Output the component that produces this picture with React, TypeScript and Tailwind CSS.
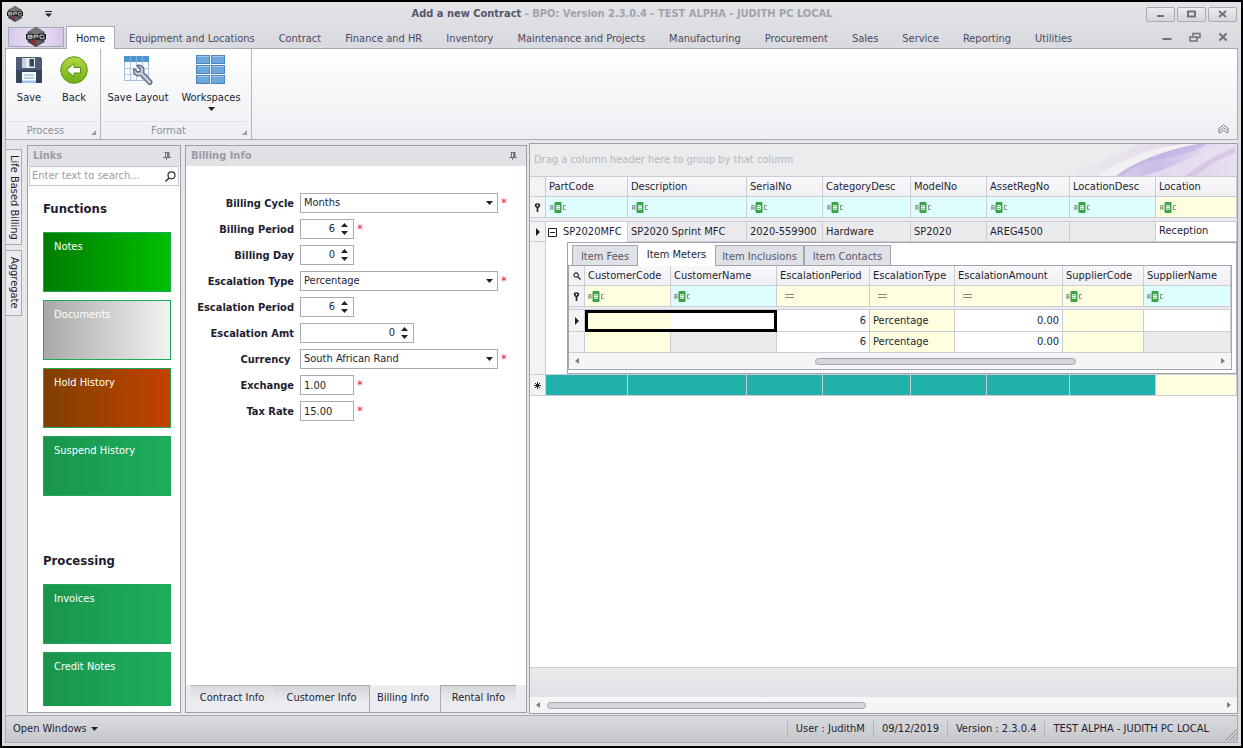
import { FC, ReactNode } from "react";

const ribbonTabs = ["Equipment and Locations", "Contract", "Finance and HR", "Inventory", "Maintenance and Projects", "Manufacturing", "Procurement", "Sales", "Service", "Reporting", "Utilities"];

const Logo: FC<{ className: string }> = ({ className }) => (
  <svg viewBox="0 0 20 20" className={className} aria-hidden="true">
    <path d="M10 0 18.500 5V15L10 20 1.500 15V5Z" fill="#454346" />
    <path d="M10 0 18.500 5 10 7.500 1.500 5Z" fill="#777578" />
    <path d="M10 20V12.500L18.500 15Z" fill="#5f5d60" />
    <rect x="0" y="7" width="20" height="5.500" fill="#1d1c1e" />
    <path d="M2 8.200H6V11.300H2ZM2 9.700H6M8 11.800V8.200H12V10H8M18 8.200H14V11.300H18V9.500" fill="none" stroke="#e0e0e0" strokeWidth=".9" />
    <circle cx="7.500" cy="15" r="1.500" fill="none" stroke="#c22" />
  </svg>
);

const DownArrow: FC<{ className?: string }> = ({ className = "" }) => (
  <svg viewBox="0 0 7 4" className={`h-1 w-[7px] ${className}`} aria-hidden="true"><path d="M0 0H7L3.500 4Z" fill="#222" /></svg>
);

const PinIcon: FC = () => (
  <svg viewBox="0 0 8 8" className="h-2 w-2" aria-hidden="true">
    <path d="M1.500 .5H6.500M2.500 0V5.500M0 5.500H8M3.500 6V8" stroke="#70727c" fill="none" />
    <path d="M4 1H6.500V5.500H4Z" fill="#70727c" />
  </svg>
);

const FilterPin: FC = () => (
  <svg viewBox="0 0 7 9" className="mx-auto h-[9px] w-[7px]" aria-hidden="true">
    <path d="M3.500 .3A2.700 2.300 0 0 1 6.200 2.700Q5.500 4.500 4.300 5V9H2.700V5Q1.500 4.500 .8 2.700A2.700 2.300 0 0 1 3.500 .3Z" fill="#222" />
    <circle cx="3.500" cy="2.500" r=".9" fill="#fff" />
  </svg>
);

const RowArrow: FC = () => (
  <svg viewBox="0 0 4 8" className="mx-auto h-2 w-1" aria-hidden="true"><path d="M0 0 4 4 0 8Z" fill="#222" /></svg>
);

const AbcIcon: FC = () => (
  <svg viewBox="0 0 16 11" className="h-[11px] w-4" aria-hidden="true">
    <rect x="4.500" y="0" width="7" height="11" rx="1" fill="#3aa547" />
    <path d="M.8 8V3.500H3V8M.8 6H3" stroke="#84868a" fill="none" />
    <path d="M6.800 3.500H9.300V7.500H6.800ZM6.800 5.500H9.300" stroke="#fff" fill="none" />
    <path d="M15.800 3.500H13.500V7.500H15.800" stroke="#84868a" fill="none" />
  </svg>
);

const EqualsIcon: FC = () => (
  <svg viewBox="0 0 9 4" className="h-1 w-[9px]" aria-hidden="true"><path d="M0 .5H9M0 3.500H9" stroke="#85878c" /></svg>
);

const SaveIcon: FC = () => (
  <svg viewBox="0 0 28 28" className="h-7 w-7" aria-hidden="true">
    <path d="M1 1H25.500L27 2.500V25.500Q27 27 25.500 27H2.500Q1 27 1 25.500Z" fill="#4b5c74" />
    <path d="M1 14H27V25.500Q27 27 25.500 27H2.500Q1 27 1 25.500Z" fill="#36455c" />
    <rect x="7" y="2" width="13" height="10" fill="#c9d0d9" />
    <rect x="11" y="2" width="9" height="10" fill="#e8ecf0" />
    <rect x="14.500" y="3" width="4.500" height="7.500" fill="#34445c" />
    <rect x="7" y="16" width="14" height="11" fill="#f4f8fc" />
    <path d="M7 24.500H21V27H7Z" fill="#9ec6ea" />
    <path d="M9 19H19M9 22H19" stroke="#7da6d4" />
  </svg>
);

const BackIcon: FC = () => (
  <svg viewBox="0 0 28 28" className="h-7 w-7" aria-hidden="true">
    <defs>
      <linearGradient id="lime" x2="0" y2="1"><stop stopColor="#b0d840" /><stop offset="1" stopColor="#6fae16" /></linearGradient>
    </defs>
    <circle cx="14" cy="14" r="13.300" fill="url(#lime)" stroke="#5c9a1b" />
    <path d="M6.500 14 14 7.500V11.500H20.500V17H14V21Z" fill="#fff" stroke="#558d15" strokeLinejoin="round" />
  </svg>
);

const LayoutIcon: FC = () => (
  <svg viewBox="0 0 30 30" className="h-[30px] w-[30px]" aria-hidden="true">
    <rect x="1.500" y="1.500" width="24" height="24" fill="#f6f9fd" stroke="#a9bdd6" />
    <path d="M1 1H26V7H1Z" fill="#4f93cf" />
    <path d="M7.500 7V26M13.500 7V26M19.500 7V26M1 13.500H26M1 19.500H26" stroke="#b9cbe0" fill="none" />
    <path d="M7.500 1V7M13.500 1V7M19.500 1V7" stroke="#7fb2e0" fill="none" />
    <path d="M14 10.500 Q18 9.500 20.300 12.500 Q21.500 15 20.500 17.500L29 26.500Q29 29.500 26.300 29.500L17.500 20.500Q14 21.500 11.500 19 10 16.500 11 13.800L14.500 17 17 16.500 17.300 14Z" fill="#c3ccd8" stroke="#5b6b82" strokeWidth="1.300" strokeLinejoin="round" />
  </svg>
);

const WorkspacesIcon: FC = () => (
  <svg viewBox="0 0 30 30" className="h-[30px] w-[30px]" aria-hidden="true">
    {[1, 11, 21].map((y) => (
      <g key={y} fill="#6fa8dc" stroke="#4c86bf">
        <rect x=".5" y={y - 0.5} width="13" height="8" />
        <rect x="15.500" y={y - 0.5} width="13" height="8" />
        <path d={`M1.500 ${y + 0.5}H13M16.500 ${y + 0.5}H28`} stroke="#a3caee" />
      </g>
    ))}
  </svg>
);

const RibbonGroup: FC<{ title: string; children: ReactNode }> = ({ title, children }) => (
  <div className="flex flex-col border-r border-[#b4b5bd] pr-1 pl-px">
    <div className="flex flex-1 gap-px pt-1">{children}</div>
    <div className="relative border-t border-[#e3e4e8] pr-3 text-center leading-[17px] text-[#8d8f99]">
      {title}
      <svg viewBox="0 0 5 5" className="absolute right-0 bottom-1 h-[5px] w-[5px]" aria-hidden="true"><path d="M5 0V5H0Z" fill="#9a9ba3" /></svg>
    </div>
  </div>
);

const RibbonButton: FC<{ label: string; wide?: boolean; menu?: boolean; children: ReactNode }> = ({ label, wide, menu, children }) => (
  <button className={`flex flex-col items-center ${wide ? "w-[72px]" : "w-11"}`}>
    <span className="flex h-[34px] items-center">{children}</span>
    <span className="mt-[3px] leading-4 whitespace-nowrap">{label}</span>
    {menu && <DownArrow className="mt-px" />}
  </button>
);

const PanelHeader: FC<{ title: string }> = ({ title }) => (
  <div className="flex h-5 shrink-0 items-center justify-between bg-[#e1e2e6] pr-[9px] pl-[5px] font-bold text-[#9a9ca8]">
    {title}
    <button aria-label={`Pin ${title}`}><PinIcon /></button>
  </div>
);

const Tile: FC<{ label: string; className: string }> = ({ label, className }) => (
  <button className={`flex h-[60px] w-full shrink-0 border px-2.5 pt-1.5 text-left leading-4 text-white ${className}`}>{label}</button>
);

const green = "border-[#1da957] bg-linear-to-r from-[#19954b] to-[#1dae5d]";

const Field: FC<{ id: string; label: string; required?: boolean; children: ReactNode }> = ({ id, label, required, children }) => (
  <div className="flex h-5 items-center">
    <label htmlFor={id} className="w-[114px] shrink-0 pt-0.5 pr-1.5 text-right font-bold whitespace-pre">{label}</label>
    {children}
    {required && <span className="pl-[3px] text-[13px] leading-4 text-[#f22]">*</span>}
  </div>
);

const SelectField: FC<{ id: string; label: string; value: string }> = ({ id, label, value }) => (
  <Field id={id} label={label} required>
    <div className="relative">
      <select id={id} className="block h-5 w-[198px] appearance-none border border-[#a9aab5] bg-white pl-[3px]"><option>{value}</option></select>
      <DownArrow className="pointer-events-none absolute top-2 right-[5px]" />
    </div>
  </Field>
);

const SpinField: FC<{ id: string; label: string; value: string; required?: boolean; wide?: boolean }> = ({ id, label, value, required, wide }) => (
  <Field id={id} label={label} required={required}>
    <div className={`flex h-5 border border-[#a9aab5] bg-white ${wide ? "w-[114px]" : "w-[54px]"}`}>
      <input id={id} defaultValue={value} inputMode="numeric" className="w-0 min-w-0 flex-1 text-right outline-none" />
      <div className="flex w-[18px] flex-col items-center justify-between py-[3px]">
        <button aria-label={`Increase ${label}`}><DownArrow className="block rotate-180" /></button>
        <button aria-label={`Decrease ${label}`}><DownArrow className="block" /></button>
      </div>
    </div>
  </Field>
);

const TextField: FC<{ id: string; label: string; value: string }> = ({ id, label, value }) => (
  <Field id={id} label={label} required>
    <input id={id} defaultValue={value} className="h-5 w-[54px] border border-[#a9aab5] bg-white pl-[3px] outline-none" />
  </Field>
);

const ScrollBar: FC<{ thumb: string }> = ({ thumb }) => (
  <div className="flex h-full items-center bg-[#f5f5f7] px-1.5">
    <svg viewBox="0 0 4 6" className="h-1.5 w-1" aria-hidden="true"><path d="M4 0V6L0 3Z" fill="#7b7d87" /></svg>
    <div className="flex flex-1 px-[7px]"><div className={`h-[7px] rounded-full border border-[#a3a4ae] bg-[#d5d6da] ${thumb}`} /></div>
    <svg viewBox="0 0 4 6" className="h-1.5 w-1" aria-hidden="true"><path d="M0 0V6L4 3Z" fill="#7b7d87" /></svg>
  </div>
);

const head = "h-5 border-r border-b border-[#cbccd6] bg-linear-to-b from-[#f8f8fa] to-[#f0f0f3] pl-[3px] text-left font-normal";
const ind = "border-r border-b border-[#cbccd6] bg-[#f3f3f6]";
const cell = "border-r border-b border-[#cbccd6] px-[3px]";
const blue = "bg-[#dfffff]";
const yellow = "bg-[#ffffdf]";
const grey = "bg-[#ebebed]";
const detailTab = "h-5 border border-b-0 border-[#a3a4b0] bg-[#e0e1e6] pt-0.5 text-[#54566a]";

const MeterGrid: FC = () => (
  <div className="border border-[#a3a4b0]">
    <table className="w-full table-fixed border-separate border-spacing-0">
      <colgroup>
        <col className="w-4" /><col className="w-[86px]" /><col className="w-[106px]" /><col className="w-[93px]" /><col className="w-[85px]" /><col className="w-[108px]" /><col className="w-[81px]" /><col />
      </colgroup>
      <thead>
        <tr>
          <th className={`${ind} h-5`}>
            <svg viewBox="0 0 9 9" className="mx-auto h-2 w-2" aria-label="Search"><circle cx="3.500" cy="3.500" r="2.500" fill="none" stroke="#222" strokeWidth="1.200" /><path d="M5.500 5.500 8.500 8.500" stroke="#222" strokeWidth="1.500" /></svg>
          </th>
          {["CustomerCode", "CustomerName", "EscalationPeriod", "EscalationType", "EscalationAmount", "SupplierCode", "SupplierName"].map((h) => <th key={h} className={head}>{h}</th>)}
        </tr>
      </thead>
      <tbody>
        <tr className="h-[21px]">
          <td className={ind}><FilterPin /></td>
          {[yellow, blue].map((c, i) => <td key={i} className={`${cell} ${c}`}><AbcIcon /></td>)}
          {[1, 2, 3].map((i) => <td key={i} className={`${cell} ${yellow} pl-2`}><EqualsIcon /></td>)}
          {[yellow, blue].map((c, i) => <td key={i} className={`${cell} ${c}`}><AbcIcon /></td>)}
        </tr>
        <tr className="h-[3px]"><td colSpan={8} className="h-[3px] border-b border-[#cbccd6] bg-[#ececf0]" /></tr>
        <tr className="h-[22px]">
          <td className={ind}><RowArrow /></td>
          <td className={`border-y-3 border-l-3 border-black ${yellow}`} />
          <td className="border-y-3 border-r-3 border-black bg-white" />
          <td className={`${cell} text-right`}>6</td>
          <td className={`${cell} ${yellow}`}>Percentage</td>
          <td className={`${cell} text-right`}>0.00</td>
          <td className={`${cell} ${yellow}`} />
          <td className={cell} />
        </tr>
        <tr className="h-[21px]">
          <td className={ind} />
          <td className={`${cell} ${yellow}`} />
          <td className={`${cell} ${grey}`} />
          <td className={`${cell} text-right`}>6</td>
          <td className={`${cell} ${yellow}`}>Percentage</td>
          <td className={`${cell} text-right`}>0.00</td>
          <td className={`${cell} ${yellow}`} />
          <td className={`${cell} ${grey}`} />
        </tr>
      </tbody>
    </table>
    <div className="h-4"><ScrollBar thumb="ml-[229px] w-[261px]" /></div>
  </div>
);

const ItemDetail: FC = () => (
  <div className="border border-[#a3a4b0] bg-white pr-1 pb-[3px]">
    <div className="flex h-[22px] items-end pl-1">
      <button className={`w-[66px] ${detailTab}`}>Item Fees</button>
      <button className="-mb-px h-[23px] w-[77px] bg-white">Item Meters</button>
      <button className={`w-[89px] ${detailTab}`}>Item Inclusions</button>
      <button className={`w-[87px] ${detailTab}`}>Item Contacts</button>
    </div>
    <MeterGrid />
  </div>
);

const ItemGrid: FC = () => (
  <section className="mt-[3px] flex min-w-0 flex-1 flex-col border border-[#9d9eaa] bg-white">
    <div className="flex h-8 shrink-0 items-center justify-between bg-[#ebecee] pl-1 text-[#b5b6bf]">
      Drag a column header here to group by that column
      <svg viewBox="0 0 180 33" preserveAspectRatio="none" className="h-8 w-[180px]" aria-hidden="true">
        <defs>
          <linearGradient id="lilac"><stop stopColor="#d5cdea" /><stop offset=".35" stopColor="#cbbce6" /><stop offset=".7" stopColor="#e0d8ee" /><stop offset="1" stopColor="#e6e0ee" /></linearGradient>
          <linearGradient id="rose"><stop stopColor="#ebecee" /><stop offset="1" stopColor="#e6d8ea" /></linearGradient>
        </defs>
        <path d="M0 30Q50 20 80 0H130Q80 10 45 33H0Z" fill="url(#rose)" />
        <path d="M58 33Q90 6 140 0H180V33Z" fill="url(#lilac)" />
        <path d="M66 33Q80 18 112 14Q135 10 150 0H118Q80 12 60 33Z" fill="#c2b0e4" opacity=".7" />
        <path d="M85 33Q125 22 160 0H180V6Q155 16 130 33Z" fill="#e7e0f0" opacity=".8" />
        <path d="M128 33Q145 18 178 3V9Q155 18 138 33Z" fill="#d6c0e2" opacity=".8" />
        <path d="M40 33Q80 6 123 0H140Q90 10 58 33Z" fill="#f1f1f4" />
      </svg>
    </div>
    <div className="min-h-0 flex-1 overflow-hidden border-t border-[#cbccd6]">
      <table className="w-full table-fixed border-separate border-spacing-0">
        <colgroup>
          <col className="w-4" /><col className="w-[82px]" /><col className="w-[119px]" /><col className="w-[76px]" /><col className="w-[88px]" /><col className="w-[76px]" /><col className="w-[83px]" /><col className="w-[86px]" /><col />
        </colgroup>
        <thead>
          <tr>
            <th className={`${ind} h-5`} />
            {["PartCode", "Description", "SerialNo", "CategoryDesc", "ModelNo", "AssetRegNo", "LocationDesc", "Location"].map((h) => <th key={h} className={head}>{h}</th>)}
          </tr>
        </thead>
        <tbody>
          <tr className="h-[21px]">
            <td className={ind}><FilterPin /></td>
            {[1, 2, 3, 4, 5, 6, 7].map((i) => <td key={i} className={`${cell} ${blue} pl-1`}><AbcIcon /></td>)}
            <td className={`${cell} ${yellow} pl-1`}><AbcIcon /></td>
          </tr>
          <tr className="h-1"><td colSpan={9} className="h-1 border-b border-[#cbccd6] bg-[#ececf0]" /></tr>
          <tr className="h-5">
            <td className={ind}><RowArrow /></td>
            <td className="border-r border-[#cbccd6] pl-0.5">
              <div className="flex items-center gap-1.5">
                <button aria-label="Collapse row"><svg viewBox="0 0 9 9" className="block h-[9px] w-[9px]" aria-hidden="true"><path d="M.5 .5H8.500V8.500H.5ZM2 4.500H7" fill="none" stroke="#222" /></svg></button>
                SP2020MFC
              </div>
            </td>
            {["SP2020 Sprint MFC", "2020-559900", "Hardware", "SP2020", "AREG4500", ""].map((v, i) => <td key={i} className={`${cell} ${grey} whitespace-nowrap`}>{v}</td>)}
            <td className={`${cell} bg-white pb-0.5`}>Reception</td>
          </tr>
          <tr>
            <td className={ind} />
            <td colSpan={8} className="border-b border-[#cbccd6] pl-[21px]"><ItemDetail /></td>
          </tr>
          <tr className="h-[21px]">
            <td className={`${ind} text-center`}>
              <svg viewBox="0 0 7 7" className="mx-auto h-[7px] w-[7px]" aria-label="New row"><path d="M3.500 0V7M0 3.500H7M1 1 6 6M6 1 1 6" stroke="#222" /></svg>
            </td>
            {[1, 2, 3, 4, 5, 6, 7].map((i) => <td key={i} className={`${cell} bg-[#20b2aa]`} />)}
            <td className={`${cell} ${yellow}`} />
          </tr>
        </tbody>
      </table>
    </div>
    <div className="h-[30px] shrink-0 border-t border-[#cbccd6] bg-linear-to-b from-[#eaeaed] to-[#e1e2e6]" />
    <div className="h-4 shrink-0"><ScrollBar thumb="w-[319px]" /></div>
  </section>
);

const App: FC = () => {
  return (
    <div className="flex h-screen flex-col overflow-hidden border-2 border-black bg-linear-to-b from-[#e3e4e8] via-[#dadbe0] via-5% to-[#d9dade] pr-[3px] pb-[3px] pl-[3px] font-['DejaVu_Sans_Condensed','DejaVu_Sans',sans-serif] text-[11px] leading-4 text-[#1e1e32]">
      <header className="flex h-6 shrink-0 items-center pr-px">
        <div className="flex flex-1 items-center gap-[22px] pl-0.5">
          <Logo className="h-4 w-4" />
          <button aria-label="Customize toolbar"><svg viewBox="0 0 7 6" className="block h-1.5 w-[7px]" aria-hidden="true"><path d="M0 0H7V1H0ZM0 2.500H7L3.500 6Z" fill="#222" /></svg></button>
        </div>
        <h1 className="font-bold text-[#a1a2ac]"><span className="text-[#55566a]">Add a new Contract</span> - BPO: Version 2.3.0.4 - TEST ALPHA - JUDITH PC LOCAL</h1>
        <div className="flex flex-1 justify-end gap-0.5">
          {["M4 8H11", "M4 3.500H11V8.500H4Z", "M4 3 11 9M11 3 4 9"].map((d, i) => (
            <button key={d} aria-label={["Minimize", "Maximize", "Close"][i]} className="flex h-[15px] w-[29px] items-center justify-center rounded-xs border border-[#a9aab4] bg-linear-to-b from-[#ececef] to-[#d5d6db]">
              <svg viewBox="0 0 15 12" className="h-3 w-[15px]" aria-hidden="true"><path d={d} fill="none" stroke="#70717c" strokeWidth="2" /></svg>
            </button>
          ))}
        </div>
      </header>

      <nav className="flex h-[22px] shrink-0 items-end">
        <button aria-label="Application menu" className="mr-0.5 mb-px ml-[3px] flex h-5 w-[56px] items-center justify-center border border-[#a9a5bb] bg-linear-to-r from-[#d5c8ea] via-[#efe4f5] to-[#d6c4ea]"><Logo className="h-5 w-5" /></button>
        <button className="relative -mb-px h-[23px] w-[49px] border border-b-0 border-[#a9aab4] bg-white pt-px">Home</button>
        <div className="flex h-[22px] flex-1 items-center pt-1 pl-0.5">
          {ribbonTabs.map((t) => <button key={t} className="px-3 whitespace-nowrap text-[#4a4a60]">{t}</button>)}
        </div>
        <div className="flex h-[22px] items-center gap-3 pr-[7px]">
          {["M3 8H12", "M5.500 5V2.500H12.500V6.500H10M2.500 6H9.500V10H2.500Z", "M4 2.500 11 9.500M11 2.500 4 9.500"].map((d, i) => (
            <button key={d} aria-label={["Minimize document", "Restore document", "Close document"][i]}>
              <svg viewBox="0 0 15 12" className="block h-3 w-4" aria-hidden="true"><path d={d} fill="none" stroke="#70717c" strokeWidth={i === 1 ? 1.5 : 2} /></svg>
            </button>
          ))}
        </div>
      </nav>

      <div className="flex h-[92px] shrink-0 border border-[#a9aab4] bg-linear-to-b from-white to-[#eeeff3]">
        <RibbonGroup title="Process">
          <RibbonButton label="Save"><SaveIcon /></RibbonButton>
          <RibbonButton label="Back"><BackIcon /></RibbonButton>
        </RibbonGroup>
        <RibbonGroup title="Format">
          <RibbonButton label="Save Layout" wide><LayoutIcon /></RibbonButton>
          <RibbonButton label="Workspaces" wide menu><WorkspacesIcon /></RibbonButton>
        </RibbonGroup>
        <div className="flex flex-1 items-end justify-end pr-[7px] pb-[5px]">
          <button aria-label="Collapse ribbon"><svg viewBox="0 0 13 10" className="block h-2.5 w-[13px]" aria-hidden="true"><path d="M1 5.500 6.500 .8 12 5.500 10.300 6.500 6.500 3.500 2.700 6.500ZM2.700 6.500 1.500 8 3 9 6.500 6.200 10 9 11.500 8 10.300 6.500" fill="#fff" stroke="#777983" /></svg></button>
        </div>
      </div>

      <main className="flex min-h-0 flex-1 border-l border-[#b4b5bd] bg-[#e6e7eb] pb-px">
        <div className="mt-[9px] mr-[5px] flex w-4 shrink-0 flex-col gap-[5px]">
          <button className="flex h-[96px] items-center justify-center border border-l-0 border-[#a9aab4] bg-[#ebecef] [writing-mode:vertical-rl]">Life Based Billing</button>
          <button className="flex h-[66px] items-center justify-center border border-l-0 border-[#a9aab4] bg-[#ebecef] [writing-mode:vertical-rl]">Aggregate</button>
        </div>

        <section className="mt-[5px] mr-1 mb-px flex w-[154px] shrink-0 flex-col border border-[#9d9eaa] bg-white">
          <PanelHeader title="Links" />
          <div className="mx-px flex h-5 shrink-0 items-center border border-[#c3c4cd] px-0.5">
            <input aria-label="Search links" placeholder="Enter text to search..." className="min-w-0 flex-1 outline-none placeholder:text-[#9a9ba6]" />
            <svg viewBox="0 0 11 11" className="h-[11px] w-[11px]" aria-hidden="true"><circle cx="6.500" cy="4.300" r="3.500" fill="none" stroke="#333" strokeWidth="1.200" /><path d="M4 7 .5 10.500" stroke="#333" strokeWidth="1.500" /></svg>
          </div>
          <div className="mb-1.5 flex flex-1 flex-col gap-2 overflow-hidden pr-[9px] pl-[15px]">
            <h2 className="mt-[15px] mb-[7px] text-[13px] leading-4 font-bold">Functions</h2>
            <Tile label="Notes" className="border-[#1da957] bg-linear-to-r from-[#007d00] to-[#00c000]" />
            <Tile label="Documents" className="border-[#1da957] bg-linear-to-r from-[#a9a9a9] to-[#f3f3f3]" />
            <Tile label="Hold History" className="border-[#1da957] bg-linear-to-r from-[#7f3f00] to-[#c44000]" />
            <Tile label="Suspend History" className={green} />
            <h2 className="mt-[49px] mb-[7px] text-[13px] leading-4 font-bold">Processing</h2>
            <Tile label="Invoices" className={green} />
            <Tile label="Credit Notes" className={green} />
          </div>
        </section>

        <section className="mt-[5px] mr-0.5 mb-px flex w-[342px] shrink-0 flex-col border border-[#9d9eaa] bg-white">
          <PanelHeader title="Billing Info" />
          <form className="flex flex-1 flex-col gap-1.5 pt-[27px]">
            <SelectField id="cycle" label="Billing Cycle" value="Months" />
            <SpinField id="period" label="Billing Period" value="6" required />
            <SpinField id="day" label="Billing Day" value="0" />
            <SelectField id="esc-type" label="Escalation Type" value="Percentage" />
            <SpinField id="esc-period" label="Escalation Period" value="6" />
            <SpinField id="esc-amt" label="Escalation Amt" value="0" wide />
            <SelectField id="currency" label="Currency " value="South African Rand" />
            <TextField id="exchange" label="Exchange" value="1.00" />
            <TextField id="tax" label="Tax Rate" value="15.00" />
          </form>
          <div className="flex h-[27px] shrink-0 bg-[#ebecef] pl-1">
            <button className="w-[84px] border-t border-[#b5b6bf] bg-linear-to-b from-[#dadbe0] to-[#ebecef] to-60% pb-0.5">Contract Info</button>
            <button className="w-[96px] border-t border-r border-[#a9aab4] bg-linear-to-b from-[#d3d4d9] to-[#ebecef] to-60% pb-0.5">Customer Info</button>
            <button className="w-[70px] pr-1 pb-0.5">Billing Info</button>
            <button className="w-[76px] border-t border-l border-[#a9aab4] bg-linear-to-b from-[#d6d7dc] to-[#ebecef] to-60% pb-0.5">Rental Info</button>
          </div>
        </section>

        <ItemGrid />
      </main>

      <footer className="flex h-7 shrink-0 items-center border border-[#a9aab4] bg-linear-to-b from-[#dadbdf] to-[#c6c7cc]">
        <button className="flex items-center gap-1 pl-[7px]">Open Windows <DownArrow /></button>
        <div className="flex flex-1 items-center justify-end">
          {["User : JudithM", "09/12/2019", "Version : 2.3.0.4", "TEST ALPHA - JUDITH PC LOCAL"].map((s) => <span key={s} className="border-l border-[#b0b1b9] px-2">{s}</span>)}
        </div>
        <svg viewBox="0 0 12 12" className="mt-3 ml-2 h-3 w-3" aria-hidden="true"><path d="M0 12 12 0M4 12 12 4M8 12 12 8" stroke="#8c8d97" /></svg>
      </footer>
    </div>
  );
};

export default App;
